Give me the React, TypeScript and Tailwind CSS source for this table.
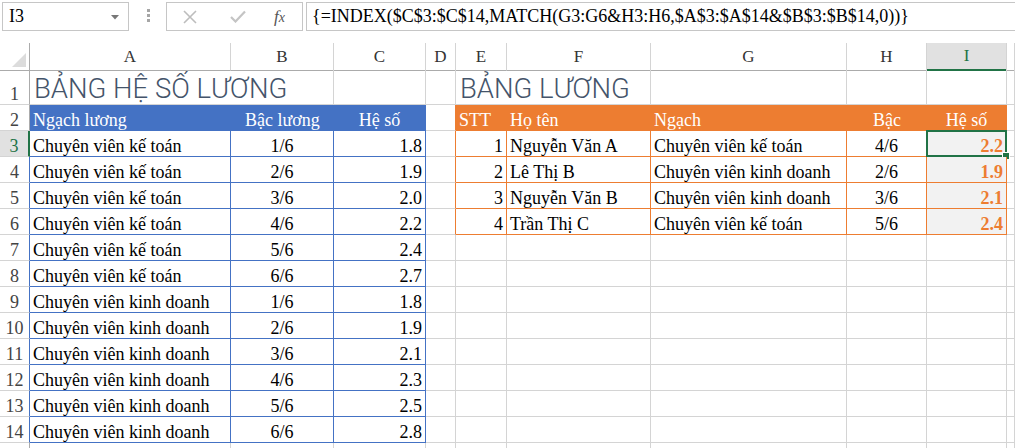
import React from "react";

const ROW = "grid grid-cols-[30px_201px_103px_92px_30px_51px_144px_196px_80px_80px_1fr]";

const G = "border-r border-b border-[#d4d4d4]"; // gridline
const BL = "border-r border-b border-[#4472c4]"; // blue table
const OR = "border-r border-b border-[#ed7d31]"; // orange table

type CellProps = { cls?: string; children?: React.ReactNode; align?: "l" | "c" | "r" };

function Cell({ cls = G, children, align = "l" }: CellProps) {
  const a = align === "l" ? "justify-start" : align === "c" ? "justify-center" : "justify-end";
  return (
    <div className={`flex items-end ${a} px-[3px] whitespace-nowrap text-[18px] leading-[19px] ${cls}`}>
      {children}
    </div>
  );
}

function RowHead({ n, sel = false, tbl = false }: { n?: number; sel?: boolean; tbl?: boolean }) {
  const c = sel
    ? "bg-[#e1e1e1] text-[#217346] border-r-2 border-r-[#217346] border-b border-b-[#d4d4d4]"
    : tbl
    ? "bg-white text-[#444] border-r border-r-[#4472c4] border-b border-b-[#d4d4d4]"
    : "bg-white text-[#444] border-r border-r-[#ababab] border-b border-b-[#d4d4d4]";
  return (
    <div className={`flex items-end justify-center text-[18px] leading-[19px] ${c}`}>{n}</div>
  );
}

const left: [string, string, string][] = [
  ["Chuyên viên kế toán", "1/6", "1.8"],
  ["Chuyên viên kế toán", "2/6", "1.9"],
  ["Chuyên viên kế toán", "3/6", "2.0"],
  ["Chuyên viên kế toán", "4/6", "2.2"],
  ["Chuyên viên kế toán", "5/6", "2.4"],
  ["Chuyên viên kế toán", "6/6", "2.7"],
  ["Chuyên viên kinh doanh", "1/6", "1.8"],
  ["Chuyên viên kinh doanh", "2/6", "1.9"],
  ["Chuyên viên kinh doanh", "3/6", "2.1"],
  ["Chuyên viên kinh doanh", "4/6", "2.3"],
  ["Chuyên viên kinh doanh", "5/6", "2.5"],
  ["Chuyên viên kinh doanh", "6/6", "2.8"],
];

const right: [string, string, string, string, string][] = [
  ["1", "Nguyễn Văn A", "Chuyên viên kế toán", "4/6", "2.2"],
  ["2", "Lê Thị B", "Chuyên viên kinh doanh", "2/6", "1.9"],
  ["3", "Nguyễn Văn B", "Chuyên viên kinh doanh", "3/6", "2.1"],
  ["4", "Trần Thị C", "Chuyên viên kế toán", "5/6", "2.4"],
];

function FormulaBar() {
  return (
    <div className="flex items-start h-[43px] bg-white pt-[2px] pl-[2px]">
      <div className="relative flex items-center w-[127px] h-[29px] border border-[#c6c6c6] pl-[6px] text-[18px] text-black">
        I3
        <svg className="absolute right-[9px] top-[12px]" width="8" height="5" viewBox="0 0 8 5">
          <path d="M0 0h8L4 4.5z" fill="#777" />
        </svg>
      </div>
      <div className="flex flex-col gap-[2px] ml-[18px] mt-[7px]">
        <div className="w-[3px] h-[3px] bg-[#a6a6a6]" />
        <div className="w-[3px] h-[3px] bg-[#a6a6a6]" />
        <div className="w-[3px] h-[3px] bg-[#a6a6a6]" />
      </div>
      <div className="flex items-center w-[137px] h-[29px] ml-[16px] border border-[#c6c6c6]">
        <svg className="ml-[16px]" width="14" height="14" viewBox="0 0 14 14">
          <path d="M1 1L13 13M13 1L1 13" stroke="#bdbdbd" strokeWidth="1.6" />
        </svg>
        <svg className="ml-[33px]" width="16" height="13" viewBox="0 0 16 13">
          <path d="M1 7l4.5 4.5L15 1.5" stroke="#c4c4c4" strokeWidth="2.2" fill="none" />
        </svg>
        <span className="ml-[28px] italic text-[17px] text-[#555] leading-none">
          f<span className="text-[14px]">x</span>
        </span>
      </div>
      <div className="flex items-center flex-1 h-[29px] ml-[3px] border border-r-0 border-[#c6c6c6] pl-[5px] text-[18px] text-black whitespace-nowrap overflow-hidden">
        {"{=INDEX($C$3:$C$14,MATCH(G3:G6&H3:H6,$A$3:$A$14&$B$3:$B$14,0))}"}
      </div>
    </div>
  );
}

function ColHeaders() {
  const letters = ["A", "B", "C", "D", "E", "F", "G", "H", "I", ""];
  return (
    <div className={`${ROW} h-[22px]`}>
      <div className="relative border-r border-r-[#ababab] border-b border-b-[#ababab] bg-white">
        <svg className="absolute right-[3px] bottom-[3px]" width="14" height="14" viewBox="0 0 14 14">
          <path d="M14 0V14H0z" fill="#dcdcdc" />
        </svg>
      </div>
      {letters.map((l, i) =>
        l === "I" ? (
          <div
            key={i}
            className="flex items-center justify-center bg-[#e1e1e1] text-[#217346] text-[17px] border-r border-r-[#d4d4d4] border-b-2 border-b-[#217346]"
          >
            {l}
          </div>
        ) : (
          <div
            key={i}
            className="flex items-center justify-center bg-white text-[#333] text-[17px] border-r border-r-[#d4d4d4] border-b border-b-[#ababab]"
          >
            {l}
          </div>
        )
      )}
    </div>
  );
}

export default function App() {
  return (
    <div className="w-[1015px] h-[448px] overflow-hidden bg-white font-['Liberation_Serif',serif] text-black">
      <FormulaBar />
      <ColHeaders />

      {/* Row 1 */}
      <div className={`${ROW} h-[40px]`}>
        <RowHead n={1} />
        <div className="relative border-b border-[#d4d4d4]">
          <span className="absolute left-[4px] bottom-[2px] whitespace-nowrap font-['Roboto',sans-serif] font-light text-[27.5px] leading-none text-[#44546a]">
            BẢNG HỆ SỐ LƯƠNG
          </span>
        </div>
        <Cell />
        <Cell />
        <Cell />
        <div className="relative border-b border-[#d4d4d4]">
          <span className="absolute left-[4px] bottom-[2px] whitespace-nowrap font-['Roboto',sans-serif] font-light text-[27.5px] leading-none text-[#44546a]">
            BẢNG LƯƠNG
          </span>
        </div>
        <Cell />
        <Cell />
        <Cell />
        <Cell />
        <Cell />
      </div>

      {/* Row 2 */}
      <div className={`${ROW} h-[26px]`}>
        <RowHead n={2} />
        <Cell cls="bg-[#4472c4] text-white border-b border-[#4472c4]">Ngạch lương</Cell>
        <Cell cls="bg-[#4472c4] text-white border-b border-[#4472c4]" align="c">
          Bậc lương
        </Cell>
        <Cell cls="bg-[#4472c4] text-white border-r border-b border-[#4472c4]" align="c">
          Hệ số
        </Cell>
        <Cell cls="border-r border-r-[#ed7d31] border-b border-b-[#d4d4d4]" />
        <Cell cls="bg-[#ed7d31] text-white border-b border-[#ed7d31]">STT</Cell>
        <Cell cls="bg-[#ed7d31] text-white border-b border-[#ed7d31]">Họ tên</Cell>
        <Cell cls="bg-[#ed7d31] text-white border-b border-[#ed7d31]">Ngạch</Cell>
        <Cell cls="bg-[#ed7d31] text-white border-b border-[#ed7d31]" align="c">
          Bậc
        </Cell>
        <Cell cls="bg-[#ed7d31] text-white border-r border-b border-[#ed7d31]" align="c">
          Hệ số
        </Cell>
        <Cell />
      </div>

      {/* Rows 3-14 */}
      {left.map((r, i) => {
        const rr = right[i];
        const rowNo = i + 3;
        return (
          <div key={i} className={`${ROW} h-[26px]`}>
            <RowHead n={rowNo} sel={rowNo === 3} tbl />
            <Cell cls={BL}>{r[0]}</Cell>
            <Cell cls={BL} align="c">
              {r[1]}
            </Cell>
            <Cell cls={BL} align="r">
              {r[2]}
            </Cell>
            {rr ? (
              <>
                <Cell cls="border-r border-r-[#ed7d31] border-b border-b-[#d4d4d4]" />
                <Cell cls={OR} align="r">
                  {rr[0]}
                </Cell>
                <Cell cls={OR}>{rr[1]}</Cell>
                <Cell cls={OR}>{rr[2]}</Cell>
                <Cell cls={OR} align="c">
                  {rr[3]}
                </Cell>
                <div className={`relative flex items-end justify-end px-[3px] text-[18px] leading-[19px] font-bold text-[#ed7d31] bg-[#f2f2f2] ${OR}`}>
                  {rr[4]}
                  {rowNo === 3 && (
                    <div className="absolute -left-[1px] -top-[1px] -right-[1px] -bottom-[1px] border-2 border-[#217346]">
                      <div className="absolute -right-[4px] -bottom-[4px] w-[6px] h-[6px] bg-[#217346] outline outline-1 outline-white" />
                    </div>
                  )}
                </div>
                <Cell />
              </>
            ) : (
              <>
                <Cell />
                <Cell />
                <Cell />
                <Cell />
                <Cell />
                <Cell />
                <Cell />
              </>
            )}
          </div>
        );
      })}

      {/* Row 15 (partially visible) */}
      <div className={`${ROW} h-[26px]`}>
        <RowHead />
        <Cell />
        <Cell />
        <Cell />
        <Cell />
        <Cell />
        <Cell />
        <Cell />
        <Cell />
        <Cell />
        <Cell />
      </div>
    </div>
  );
}
